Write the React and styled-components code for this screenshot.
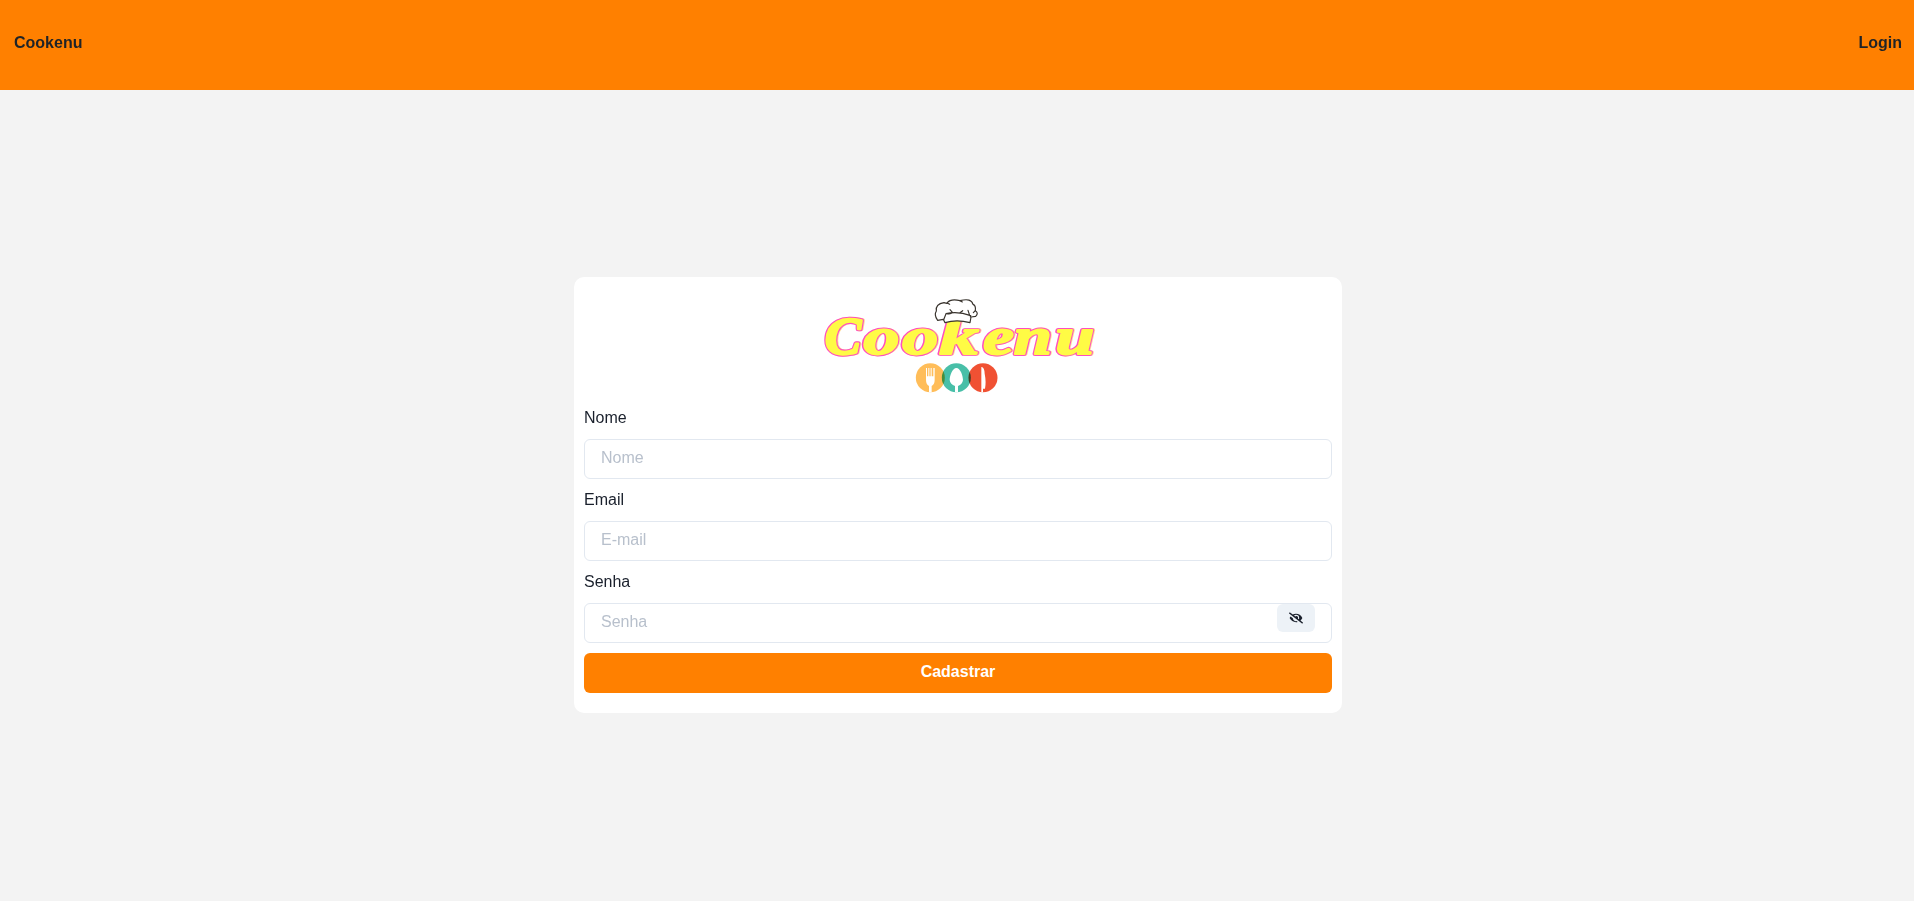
import React, { useState } from "react";
import styled, { createGlobalStyle } from "styled-components";
import { FaEye, FaEyeSlash } from "react-icons/fa";

const GlobalStyle = createGlobalStyle`
  *, *::before, *::after { box-sizing: border-box; }
  body {
    margin: 0;
    background: #fff;
    color: #1a202c;
    font: 400 16px/24px "Liberation Sans", Helvetica, Arial, sans-serif;
    overflow: hidden;
  }
`;

const Header = styled.header`
  display: flex;
  justify-content: space-between;
  height: 90px;
  padding: 31px 12px 0 14px;
  background: #ff8000;
`;

const NavLink = styled.a`
  color: #1f2327;
  font-weight: 700;
  cursor: pointer;
`;

const Main = styled.main`
  display: flex;
  align-items: flex-start;
  justify-content: center;
  height: 811px;
  padding: 187px 0 0 2px;
  background: #f3f3f3;
`;

const Card = styled.form`
  display: flex;
  flex-direction: column;
  width: 768px;
  height: 436px;
  padding: 3px 10px 20px;
  border-radius: 10px;
  background: #fff;
`;

const LogoArt = styled.svg`
  display: block;
  align-self: center;
  width: 320px;
  height: 120px;
  margin-bottom: 5px;
`;

const Letter = styled.text`
  font: italic 700 180px "Liberation Serif", "Times New Roman", serif;
  stroke-linejoin: round;
  vector-effect: non-scaling-stroke;
  fill: ${(p) => p.$color};
  stroke: ${(p) => p.$color};
  stroke-width: ${(p) => p.$weight}px;
`;

const Disc = styled.circle`
  mix-blend-mode: multiply;
`;

const Field = styled.div`
  display: flex;
  flex-direction: column;
  gap: 10px;
  margin-bottom: ${(p) => (p.$last ? "10px" : "8px")};
`;

const Label = styled.label`
  height: 24px;
  line-height: 26px;
`;

const InputBox = styled.div`
  display: flex;
  align-items: flex-start;
  height: 40px;
  padding-right: 16px;
  border: 1px solid #e2e8f0;
  border-radius: 6px;
`;

const Input = styled.input`
  flex: 1;
  min-width: 0;
  height: 35px;
  padding: 0 16px;
  border: 0;
  outline: 0;
  background: transparent;
  color: inherit;
  font: inherit;
  &::placeholder { color: #b8c0cc; opacity: 1; }
`;

const EyeButton = styled.button`
  display: flex;
  align-items: center;
  justify-content: center;
  width: 38px;
  height: 28px;
  padding: 0;
  border: 0;
  border-radius: 6px;
  background: #edf2f7;
  color: #1a202c;
  font-size: 14px;
`;

const SubmitButton = styled.button`
  height: 40px;
  padding: 0 0 3px;
  border: 0;
  border-radius: 6px;
  background: #ff8000;
  color: #fff;
  font: inherit;
  font-weight: 700;
`;

const LETTERS = [
  { char: "C", x: 74, stretch: 0.91 },
  { char: "o", x: 190, stretch: 1.2 },
  { char: "o", x: 306, stretch: 1.2 },
  { char: "k", x: 417, stretch: 1.32 },
  { char: "e", x: 549, stretch: 1.15 },
  { char: "n", x: 641, stretch: 1.14 },
  { char: "u", x: 766, stretch: 1.16 },
];

function Wordmark({ dx = 0, color, weight, hidden }) {
  return (
    <g aria-hidden={hidden}>
      {LETTERS.map(({ char, x, stretch }) => (
        <Letter
          key={x}
          transform={`translate(${x + dx} 221) scale(${stretch} 0.88)`}
          $color={color}
          $weight={weight}
        >
          {char}
        </Letter>
      ))}
    </g>
  );
}

function Logo() {
  return (
    <LogoArt viewBox="-6 0 960 360" role="img" aria-label="Cookenu">
      <Wordmark dx={3} color="#ffdc9c" weight={4.4} hidden />
      <Wordmark color="#ff4fbf" weight={4.6} />
      <Wordmark dx={0.5} color="#fffb45" weight={2.3} hidden />
      <path
        d="M413 121 Q401 105 409 93 Q406 72 432 68 Q445 72 441 69 Q452 55 480 62 Q514 53 519 73 Q528 76 526 92 Q537 99 527 109 L513 111 L510 128 Q470 117 435 128 L430 118 Z"
        fill="#fff" stroke="#39342e" strokeWidth="3.5" strokeLinejoin="round"
      />
      <path
        d="M431 119 L438 101 Q475 93 512 107 L511 111 M440 101 Q451 104 458 98 L450 89 M480 98 L488 92 M509 106 L504 91 M441 69 L449 73 M480 62 L487 66 M526 92 L520 98"
        fill="none" stroke="#39342e" strokeWidth="3.5" strokeLinecap="round"
      />
      <Disc cx="391" cy="293" r="43.5" fill="#ffbd59" />
      <Disc cx="469" cy="293" r="43.5" fill="#48bfa8" />
      <Disc cx="549" cy="293" r="43.5" fill="#f05133" />
      <path
        d="M378 264 H381 V289 H385 V264 H388 V289 H392 V264 H395 V289 H400 V264 H404 V299 Q404 313 395 318 V337 H387 V318 Q378 313 378 299 Z"
        fill="#fff"
      />
      <path d="M469 264 C481 264 489 287 489 300 Q487 314 474 318 V337 H465 V318 Q451 314 449 300 C449 286 458 264 469 264 Z" fill="#fff" />
      <path d="M544 261 Q553 260 554 281 Q559 306 555 326 H549 V337 H544 Z" fill="#fff" />
    </LogoArt>
  );
}

export default function App() {
  const [visible, setVisible] = useState(false);
  return (
    <>
      <GlobalStyle />
      <Header>
        <NavLink>Cookenu</NavLink>
        <NavLink>Login</NavLink>
      </Header>
      <Main>
        <Card onSubmit={(e) => e.preventDefault()}>
          <Logo />
          <Field>
            <Label htmlFor="name">Nome</Label>
            <InputBox><Input id="name" placeholder="Nome" /></InputBox>
          </Field>
          <Field>
            <Label htmlFor="email">Email</Label>
            <InputBox><Input id="email" type="email" placeholder="E-mail" /></InputBox>
          </Field>
          <Field $last>
            <Label htmlFor="password">Senha</Label>
            <InputBox>
              <Input id="password" type={visible ? "text" : "password"} placeholder="Senha" />
              <EyeButton type="button" onClick={() => setVisible(!visible)}>
                {visible ? <FaEye /> : <FaEyeSlash />}
              </EyeButton>
            </InputBox>
          </Field>
          <SubmitButton>Cadastrar</SubmitButton>
        </Card>
      </Main>
    </>
  );
}
